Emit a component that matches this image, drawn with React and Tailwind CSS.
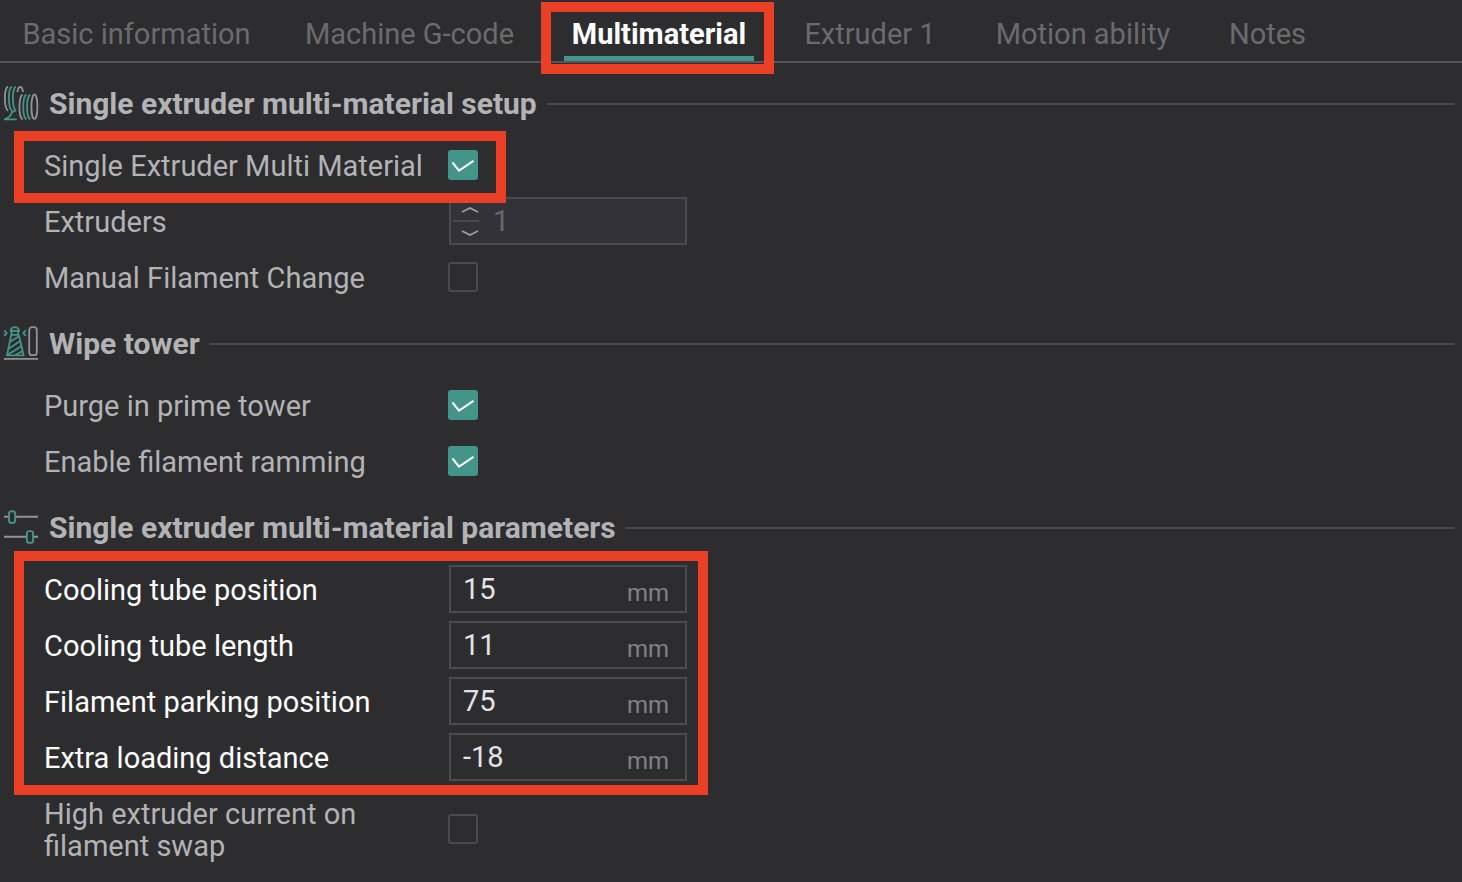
import { useState } from "react";

const TABS = [
  { name: "Basic information", width: "w-[273px]" },
  { name: "Machine G-code", width: "w-[273px]" },
  { name: "Multimaterial", width: "w-[226px]" },
  { name: "Extruder 1", width: "w-[196px]" },
  { name: "Motion ability", width: "w-[230px]" },
  { name: "Notes", width: "w-[139px]" },
];

function SpoolIcon() {
  return (
    <svg className="size-9 shrink-0" viewBox="0 0 36 36" fill="none" strokeWidth="1.8" aria-hidden="true">
      <g stroke="#939396">
        <path d="M5 .6C.8 2.500.8 22.500 5.200 24.800" />
        <path d="M14.400 6.200C15 2.500 15.800 1 17.200 1c1.600 0 2.500 2 2.800 5" />
        <path d="M19.600 8.600C15.400 11 15.400 31 19.600 33.400" />
        <ellipse cx="31.400" cy="20.800" rx="3" ry="12.400" />
      </g>
      <g stroke="#429588">
        <path d="M9 .6C4.800 2.500 4.800 22.500 9.200 24.800" />
        <path d="M13 .6C8.800 2.500 8.800 22.500 13.200 24.800" />
        <path d="M23.400 8.600C19.200 11 19.200 31 23.400 33.400" />
        <path d="M27.200 8.600C23 11 23 31 27.200 33.400" />
        <path d="M9 24.800C8.900 29.400 6.500 31.600 2 32.900M1 33.400H13.800M9 25.800l3.600-1" />
      </g>
    </svg>
  );
}

function TowerIcon() {
  return (
    <svg className="size-9 shrink-0" viewBox="0 0 36 36" fill="none" strokeWidth="1.800" aria-hidden="true">
      <g stroke="#939396">
        <rect x="26.200" y="1.200" width="7.600" height="28" rx="2.800" />
        <path d="M1 32.800H35" />
      </g>
      <g stroke="#429588" strokeLinejoin="round">
        <path d="M7.400 4.600C8.200 2.200 9.800 1.200 11.800 1.200s3.700 1 4.500 3.400M6.800 4.800h10M8.600 5v3.600M15.200 5v3.600M7.600 8.800h8.600M8.200 8.800L4 29.400H20.600L15.800 8.800" />
        <path d="M7 15.800L15.600 10.400M5.600 22.800L17.200 15M5 28.600L18.800 20M12.600 29L20 24.800" />
        <path d="M1.200 4.400l2.600 2.700L1.200 9.800M22.800 4.400L20.200 7.100l2.600 2.700" />
      </g>
    </svg>
  );
}

function SlidersIcon() {
  return (
    <svg className="size-9 shrink-0" viewBox="0 0 36 36" fill="none" strokeWidth="1.900" aria-hidden="true">
      <path stroke="#939396" d="M1 6.800H6M12 6.800H35M1 26.800H24M30 26.800H35" />
      <g stroke="#429588">
        <rect x="6" y="1.200" width="6.200" height="11.800" rx="2.400" />
        <rect x="23.900" y="21.100" width="6.200" height="11.800" rx="2.400" />
      </g>
    </svg>
  );
}

function Highlight({ className }) {
  return <div className={`pointer-events-none absolute z-10 border-10 border-[#eb4026] ${className}`} />;
}

function Section({ icon, title, children }) {
  return (
    <section className="pt-1">
      <div className="flex h-17 items-center pl-[3px] pr-2">
        {icon}
        <h2 className="ml-2.5 text-[30px] leading-8 font-bold text-[#b3b3b5]">{title}</h2>
        <div className="ml-2.5 h-0.5 flex-1 bg-[#4a4a51]" />
      </div>
      {children}
    </section>
  );
}

function Row({ id, label, bright = false, children }) {
  return (
    <div className="flex min-h-14 items-center pl-11">
      <label
        htmlFor={id}
        className={`w-[404px] shrink-0 py-3 pr-5 text-[29px] leading-8 ${bright ? "text-[#fdfdfd]" : "text-[#b3b3b5]"}`}
      >
        {label}
      </label>
      <div className="pb-0.5">{children}</div>
    </div>
  );
}

function CheckRow({ id, label, initial = false }) {
  const [on, setOn] = useState(initial);
  return (
    <Row id={id} label={label}>
      <div className="grid">
        <input
          id={id}
          type="checkbox"
          checked={on}
          onChange={(e) => setOn(e.target.checked)}
          className="col-start-1 row-start-1 size-[30px] appearance-none rounded-[3px] border-2 border-[#4a4a51] checked:border-[#429588] checked:bg-[#429588]"
        />
        {on && (
          <svg
            className="pointer-events-none col-start-1 row-start-1 size-[30px]"
            viewBox="0 0 30 30"
            fill="none"
            stroke="#fff"
            strokeWidth="2"
            aria-hidden="true"
          >
            <path d="M4.500 12.500L11 20.600L25.500 10.800" />
          </svg>
        )}
      </div>
    </Row>
  );
}

function LengthRow({ id, label, initial }) {
  const [value, setValue] = useState(initial);
  return (
    <Row id={id} label={label} bright>
      <div className="ml-px flex h-12 w-[238px] items-center border-2 border-[#4a4a51] pl-3 pr-4">
        <input
          id={id}
          type="text"
          value={value}
          onChange={(e) => setValue(e.target.value)}
          className="min-w-0 flex-1 bg-transparent text-[29px] leading-8 text-[#e3e3e4] outline-none"
        />
        <span className="pt-2 text-2xl leading-8 text-[#828285]">mm</span>
      </div>
    </Row>
  );
}

function Chevron({ d }) {
  return (
    <svg className="h-2 w-[18px]" viewBox="0 0 18 8" fill="none" stroke="#a0a0a3" strokeWidth="1.800" aria-hidden="true">
      <path d={d} />
    </svg>
  );
}

export default function App() {
  const [active, setActive] = useState("Multimaterial");
  return (
    <div className="min-h-screen bg-[#2d2d30] pb-2 font-[Roboto,sans-serif]">
      <nav className="flex border-b-2 border-[#55555c]">
        {TABS.map(({ name, width }) => (
          <button
            key={name}
            type="button"
            onClick={() => setActive(name)}
            className={`relative flex h-[61px] justify-center pt-[13px] text-[29px] leading-[42px] whitespace-nowrap ${width} ${
              active === name ? "font-bold text-[#fdfdfd]" : "text-[#6b6b6d]"
            }`}
          >
            <span className={`border-[#429588] px-2 ${active === name ? "h-12 border-b-5" : ""}`}>{name}</span>
            {name === "Multimaterial" && <Highlight className="-left-[5px] top-0.5 h-18 w-[233px]" />}
          </button>
        ))}
      </nav>

      <main className="pt-[3px]">
        <Section icon={<SpoolIcon />} title="Single extruder multi-material setup">
          <div className="relative">
            <CheckRow id="semm" label="Single Extruder Multi Material" initial />
            <Highlight className="-top-[7px] left-3.5 h-18 w-[492px]" />
          </div>
          <Row id="extruders" label="Extruders">
            <div className="ml-px flex h-12 w-[238px] items-center border-2 border-[#4a4a51] bg-[#333238] pl-0.5">
              <div className="flex w-[26px] flex-col">
                <button type="button" aria-label="Increase extruders" className="flex h-[21px] items-center justify-end">
                  <Chevron d="M1 6L9 2L17 6" />
                </button>
                <div className="h-0.5 bg-[#4a4a51]" />
                <button type="button" aria-label="Decrease extruders" className="flex h-[21px] items-center justify-end">
                  <Chevron d="M1 2L9 6L17 2" />
                </button>
              </div>
              <input
                id="extruders"
                type="text"
                value="1"
                disabled
                className="ml-3.5 min-w-0 flex-1 bg-transparent text-[29px] leading-8 text-[#68686b]"
              />
            </div>
          </Row>
          <CheckRow id="manual" label="Manual Filament Change" />
        </Section>

        <Section icon={<TowerIcon />} title="Wipe tower">
          <CheckRow id="purge" label="Purge in prime tower" initial />
          <CheckRow id="ramming" label="Enable filament ramming" initial />
        </Section>

        <Section icon={<SlidersIcon />} title="Single extruder multi-material parameters">
          <div className="relative">
            <LengthRow id="tube-position" label="Cooling tube position" initial="15" />
            <LengthRow id="tube-length" label="Cooling tube length" initial="11" />
            <LengthRow id="parking" label="Filament parking position" initial="75" />
            <LengthRow id="loading" label="Extra loading distance" initial="-18" />
            <Highlight className="-top-[11px] -bottom-[9px] left-3.5 w-[694px]" />
          </div>
          <CheckRow id="current" label="High extruder current on filament swap" />
        </Section>
      </main>
    </div>
  );
}
